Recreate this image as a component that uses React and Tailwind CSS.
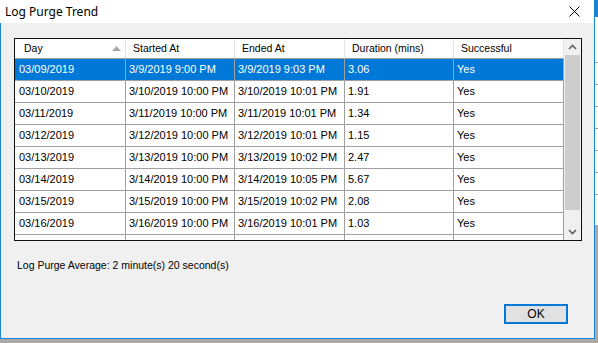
import React from "react";

const rows = [
  ["03/09/2019", "3/9/2019 9:00 PM", "3/9/2019 9:03 PM", "3.06", "Yes"],
  ["03/10/2019", "3/10/2019 10:00 PM", "3/10/2019 10:01 PM", "1.91", "Yes"],
  ["03/11/2019", "3/11/2019 10:00 PM", "3/11/2019 10:01 PM", "1.34", "Yes"],
  ["03/12/2019", "3/12/2019 10:00 PM", "3/12/2019 10:01 PM", "1.15", "Yes"],
  ["03/13/2019", "3/13/2019 10:00 PM", "3/13/2019 10:02 PM", "2.47", "Yes"],
  ["03/14/2019", "3/14/2019 10:00 PM", "3/14/2019 10:05 PM", "5.67", "Yes"],
  ["03/15/2019", "3/15/2019 10:00 PM", "3/15/2019 10:02 PM", "2.08", "Yes"],
  ["03/16/2019", "3/16/2019 10:00 PM", "3/16/2019 10:01 PM", "1.03", "Yes"],
];

const widths = ["w-[111px]", "w-[109px]", "w-[110px]", "w-[109px]", "w-[110px]"];
const headers = ["Day", "Started At", "Ended At", "Duration (mins)", "Successful"];

function Chevron({ down }) {
  return (
    <svg width="9" height="6" viewBox="0 0 9 6">
      <path
        d={down ? "M1 1 L4.5 4.5 L8 1" : "M1 5 L4.5 1.5 L8 5"}
        fill="none"
        stroke="#606060"
        strokeWidth="1.6"
      />
    </svg>
  );
}

export default function App() {
  return (
    <div className="w-[598px] h-[343px] flex flex-col bg-white overflow-hidden font-['Liberation_Sans',Arial,sans-serif] text-black">
      <div className="flex h-[339px]">
        {/* Dialog */}
        <div className="w-[595px] flex flex-col">
          {/* Title bar */}
          <div className="h-[23px] bg-white flex items-center justify-between pl-[5px] pr-[14px] border-r border-[#1883d7]">
            <span className="text-[12px] font-['Noto_Sans',sans-serif] leading-none">Log Purge Trend</span>
            <svg width="11" height="11" viewBox="0 0 11 11">
              <path d="M0.5 0.5 L10.5 10.5 M10.5 0.5 L0.5 10.5" stroke="#000" strokeWidth="1" />
            </svg>
          </div>

          {/* Body */}
          <div className="flex-1 bg-[#f0f0f0] border-l border-r border-b border-[#1883d7] pt-[15px] pl-[13px] flex flex-col">
            {/* List */}
            <div className="w-[568px] h-[203px] border border-[#101010] bg-white flex overflow-hidden">
              <div className="w-[549px] flex flex-col text-[11px]">
                <div className="flex h-[20px] border-b border-[#a0a0a0] shrink-0">
                  {headers.map((h, i) => (
                    <div
                      key={h}
                      className={`${widths[i]} shrink-0 flex items-center justify-between border-r border-[#e5e5e5] ${i === 0 ? "pl-[9px] pr-[4px]" : "pl-[7px]"}`}
                    >
                      <span className="text-[10.5px]">{h}</span>
                      {i === 0 && (
                        <svg width="9" height="5" viewBox="0 0 9 5">
                          <path d="M0 5 L4.5 0 L9 5 Z" fill="#a7a7a7" />
                        </svg>
                      )}
                    </div>
                  ))}
                </div>
                {rows.map((r, ri) => (
                  <div
                    key={r[0]}
                    className={`flex h-[22px] shrink-0 border-b border-[#a0a0a0] ${ri === 0 ? "bg-[#0078d7] text-white" : ""}`}
                  >
                    {r.map((c, ci) => (
                      <div
                        key={ci}
                        className={`${widths[ci]} shrink-0 flex items-center border-r border-[#a0a0a0] ${ci === 0 ? "pl-[4px]" : "pl-[3px]"}`}
                      >
                        {c}
                      </div>
                    ))}
                  </div>
                ))}
                <div className="flex flex-1">
                  {widths.map((w, i) => (
                    <div key={i} className={`${w} shrink-0 border-r border-[#a0a0a0]`} />
                  ))}
                </div>
              </div>

              {/* Scrollbar */}
              <div className="w-[17px] bg-[#f0f0f0] flex flex-col items-center">
                <div className="h-[16px] w-full flex items-center justify-center">
                  <Chevron />
                </div>
                <div className="w-[15px] h-[155px] bg-[#cdcdcd]" />
                <div className="flex-1" />
                <div className="h-[17px] w-full flex items-center justify-center">
                  <Chevron down />
                </div>
              </div>
            </div>

            <div className="mt-[18px] pl-[3px] text-[10.5px] leading-[13px]">
              Log Purge Average: 2 minute(s) 20 second(s)
            </div>

            <button className="mt-[32px] ml-[490px] w-[64px] h-[20px] border-2 border-[#0078d7] bg-[#e1e1e1] text-[12px] leading-none flex items-center justify-center">
              OK
            </button>
          </div>
        </div>

        {/* Window behind */}
        <div className="w-[3px] flex flex-col">
          <div className="h-[17px] bg-[#1883d7]" />
          <div className="h-[45px]" />
          {[0, 1, 2, 3, 4, 5, 6].map((k) => (
            <div key={k} className="h-[22px] border-t border-[#a0a0a0]" />
          ))}
          <div className="h-[9px]" />
          <div className="flex-1 bg-[#a9a9a9]" />
        </div>
      </div>
      <div className="h-[4px] bg-[#a9a9a9]" />
    </div>
  );
}
